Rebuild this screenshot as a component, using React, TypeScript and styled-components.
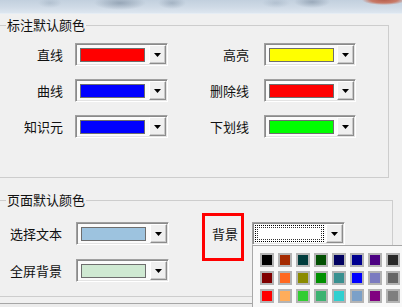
import React from 'react';
import styled, { createGlobalStyle } from 'styled-components';

const Global = createGlobalStyle`
  html, body { margin: 0; padding: 0; }
  body {
    width: 402px;
    height: 307px;
    overflow: hidden;
    background: #f0f0f0;
    font-family: "Noto Sans CJK SC", "Noto Sans", sans-serif;
    font-size: 13px;
    color: #000;
  }
`;

const Window = styled.div`
  width: 402px;
  height: 307px;
  overflow: hidden;
  display: flex;
  flex-direction: column;
  background: #f0f0f0;
`;

const TitleBar = styled.div`
  flex: none;
  height: 13px;
  border-bottom: 1px solid #e6edf4;
  background:
    radial-gradient(ellipse 22px 5px at 384px 0px, #b8604e 0%, #c87a68 60%, rgba(200,122,104,0) 100%),
    radial-gradient(ellipse 26px 7px at 120px 3px, rgba(110,128,148,0.55), rgba(110,128,148,0) 100%),
    radial-gradient(ellipse 14px 6px at 172px 3px, rgba(120,138,158,0.45), rgba(120,138,158,0) 100%),
    radial-gradient(ellipse 18px 6px at 312px 2px, rgba(110,128,148,0.5), rgba(110,128,148,0) 100%),
    radial-gradient(ellipse 14px 5px at 276px 3px, rgba(130,148,168,0.3), rgba(130,148,168,0) 100%),
    radial-gradient(ellipse 12px 5px at 50px 3px, rgba(130,148,168,0.3), rgba(130,148,168,0) 100%),
    linear-gradient(to bottom, #c2d0de 0%, #cfdae6 55%, #dde6ef 100%);
`;

const Content = styled.div`
  flex: 1;
  display: flex;
  flex-direction: column;
  padding-top: 3px;
`;

const Group = styled.fieldset<{ $w: number; $pt: number; $pb: number; $gap: number }>`
  box-sizing: border-box;
  width: ${(p) => p.$w}px;
  margin: 0 0 0 -2px;
  padding: ${(p) => p.$pt}px 0 ${(p) => p.$pb}px 0;
  border: 1px solid #cdcdcd;
  display: flex;
  flex-direction: column;
  gap: ${(p) => p.$gap}px;
  & + & {
    margin-top: 14px;
  }
`;

const Legend = styled.legend`
  margin-left: 7px;
  padding: 0 1px;
  font-size: 13px;
  line-height: 16px;
  color: #111;
`;

const Row = styled.div`
  display: flex;
  align-items: center;
  height: 23px;
`;

const Cell = styled.div<{ $ml?: number; $gap: number }>`
  display: flex;
  align-items: center;
  margin-left: ${(p) => p.$ml ?? 0}px;
  gap: ${(p) => p.$gap}px;
`;

const Label = styled.span<{ $w: number; $align?: string; $pl?: number }>`
  position: relative;
  box-sizing: border-box;
  width: ${(p) => p.$w}px;
  padding-left: ${(p) => p.$pl ?? 0}px;
  text-align: ${(p) => p.$align ?? 'right'};
  line-height: 23px;
  white-space: nowrap;
  color: #111;
`;

const Highlight = styled.span`
  position: absolute;
  left: -10px;
  top: -9px;
  width: 42px;
  height: 48px;
  box-sizing: border-box;
  border: 3px solid #ff0000;
`;

const ComboBox = styled.div<{ $w: number }>`
  position: relative;
  box-sizing: border-box;
  width: ${(p) => p.$w}px;
  height: 23px;
  display: flex;
  align-items: stretch;
  padding: 1px;
  border: 1px solid;
  border-color: #a0a0a0 #ffffff #ffffff #a0a0a0;
  box-shadow: inset 1px 1px 0 #8a8a8a, inset -1px -1px 0 #e3e3e3;
  background: #fbfbfb;
`;

const SwatchArea = styled.div`
  flex: 1;
  display: flex;
  align-items: center;
  padding-left: 3px;
`;

const Swatch = styled.div<{ $c: string; $focus?: boolean }>`
  box-sizing: border-box;
  width: ${(p) => (p.$focus ? 69 : 65)}px;
  height: ${(p) => (p.$focus ? 17 : 14)}px;
  margin-left: ${(p) => (p.$focus ? -2 : 0)}px;
  background: ${(p) => p.$c};
  border: 1px ${(p) => (p.$focus ? 'dotted #000' : 'solid #6e6e6e')};
  outline: ${(p) => (p.$focus ? '1px dotted #333' : 'none')};
  outline-offset: -3px;
`;

const DropButton = styled.div`
  box-sizing: border-box;
  width: 17px;
  display: flex;
  align-items: center;
  justify-content: center;
  background: #f0f0f0;
  border: 1px solid;
  border-color: #ffffff #8c8c8c #8c8c8c #ffffff;
  box-shadow: inset -1px -1px 0 #c8c8c8;
`;

const Popup = styled.div`
  position: absolute;
  left: -1px;
  top: 22px;
  width: 170px;
  box-sizing: border-box;
  padding: 7px 0 10px 7px;
  border: 1px solid #a8a8a8;
  background: #f8f8f8;
  display: grid;
  grid-template-columns: repeat(8, 14px);
  grid-auto-rows: 14px;
  gap: 4px;
  z-index: 5;
`;

const Chip = styled.div<{ $c: string }>`
  box-sizing: border-box;
  width: 14px;
  height: 14px;
  border: 2px solid #b4b4b4;
  background: ${(p) => p.$c};
`;

const Footer = styled.div`
  margin-top: 6px;
  flex: 1;
  border-top: 1px solid #a6a6a6;
  background: #ececec;
`;

const Arrow = () => (
  <svg width="7" height="4" viewBox="0 0 7 4">
    <polygon points="0,0 7,0 3.5,4" fill="#000" />
  </svg>
);

const Combo = ({ color, w = 93, focus, children }: { color: string; w?: number; focus?: boolean; children?: React.ReactNode }) => (
  <ComboBox $w={w}>
    <SwatchArea>
      <Swatch $c={color} $focus={focus} />
    </SwatchArea>
    <DropButton>
      <Arrow />
    </DropButton>
    {children}
  </ComboBox>
);

const palette = [
  '#000000', '#a52a00', '#003c3c', '#004f00', '#000060', '#000090', '#4b0082', '#282828',
  '#800000', '#ff6820', '#8b8b00', '#009000', '#389090', '#0000ff', '#7b7bc0', '#666666',
  '#ff0000', '#ffad5b', '#32cd32', '#3cb371', '#30d0d0', '#7ba0c8', '#800080', '#7f7f7f',
  '#f0c0c8', '#e0c040', '#e8e040', '#40e040', '#40e0e0', '#40c0f0', '#e090e0', '#c0c0c0',
];

const annotation = [
  { l: '直线', c: '#ff0000', r: '高亮', rc: '#ffff00' },
  { l: '曲线', c: '#0000ff', r: '删除线', rc: '#ff0000' },
  { l: '知识元', c: '#0000ff', r: '下划线', rc: '#00ff00' },
];

export default function App() {
  return (
    <Window>
      <Global />
      <TitleBar />
      <Content>
        <Group $w={391} $pt={10} $pb={39} $gap={13}>
          <Legend>标注默认颜色</Legend>
          {annotation.map((r) => (
            <Row key={r.l}>
              <Cell $gap={12}>
                <Label $w={64}>{r.l}</Label>
                <Combo color={r.c} />
              </Cell>
              <Cell $ml={21} $gap={15}>
                <Label $w={60}>{r.r}</Label>
                <Combo color={r.rc} w={92} />
              </Cell>
            </Row>
          ))}
        </Group>
        <Group $w={395} $pt={14} $pb={14} $gap={14}>
          <Legend>页面默认颜色</Legend>
          <Row>
            <Cell $gap={12}>
              <Label $w={65} $align="left" $pl={11}>选择文本</Label>
              <Combo color="#9dc3df" />
            </Cell>
            <Cell $ml={43} $gap={14}>
              <Label $w={26} $align="left">
                背景
                <Highlight />
              </Label>
              <Combo color="#ffffff" focus>
                <Popup>
                  {palette.map((c, i) => (
                    <Chip key={i} $c={c} />
                  ))}
                </Popup>
              </Combo>
            </Cell>
          </Row>
          <Row>
            <Cell $gap={12}>
              <Label $w={65} $align="left" $pl={11}>全屏背景</Label>
              <Combo color="#cfe9d2" />
            </Cell>
          </Row>
        </Group>
        <Footer />
      </Content>
    </Window>
  );
}
